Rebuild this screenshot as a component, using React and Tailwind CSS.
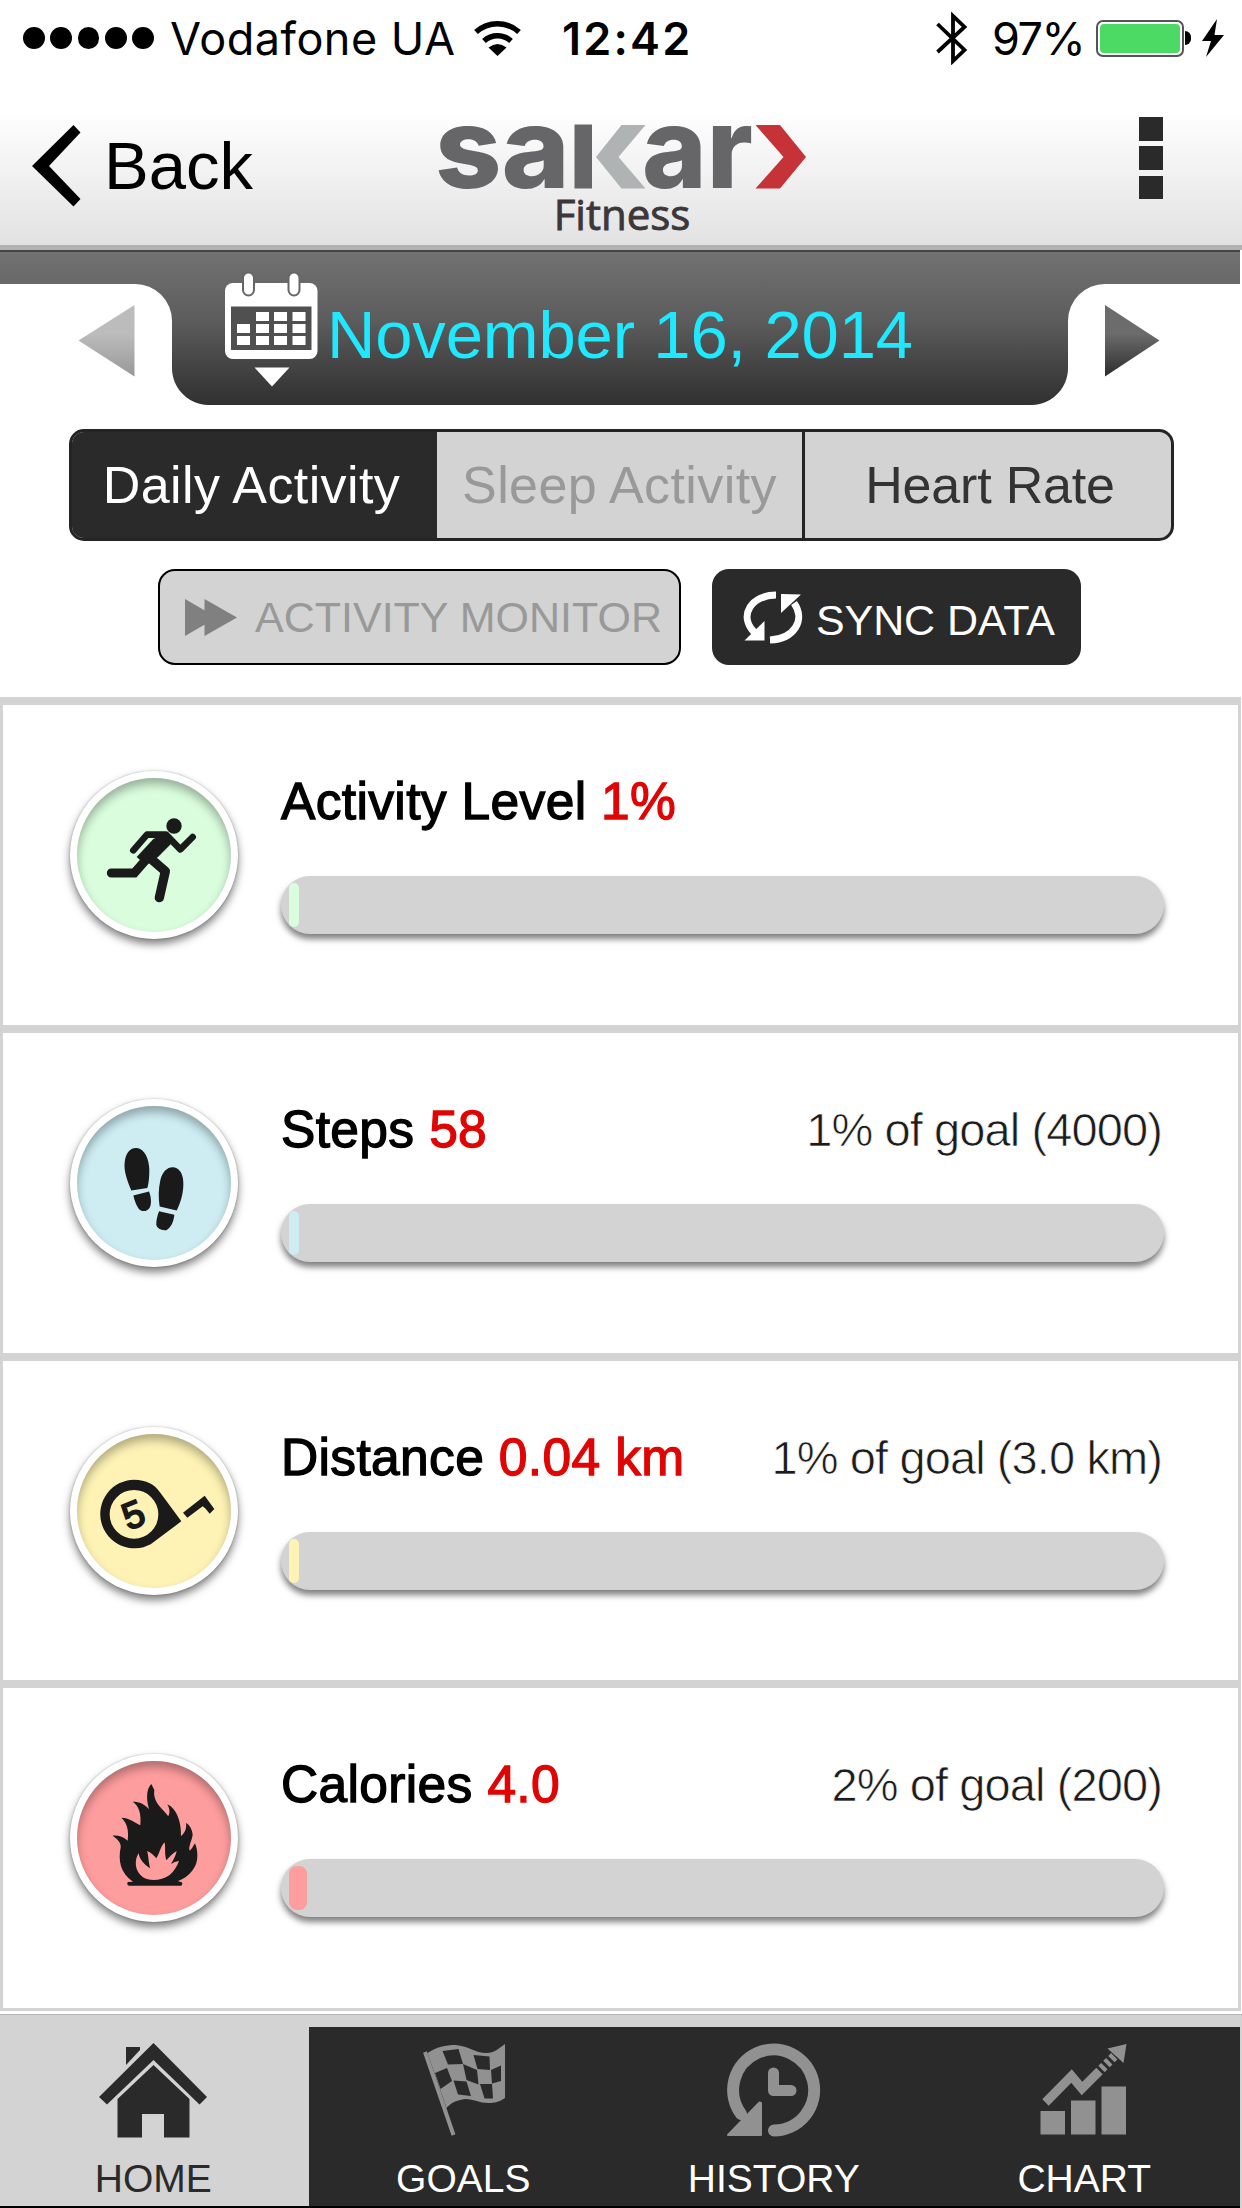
import React from 'react';

const metrics = [
  { id: 'activity', label: 'Activity Level', value: '1%', goal: '', tint: 'bg-[#d9fddd]', fill: 10, Icon: RunnerIcon },
  { id: 'steps', label: 'Steps', value: '58', goal: '1% of goal (4000)', tint: 'bg-[#cdedf3]', fill: 10, Icon: StepsIcon },
  { id: 'distance', label: 'Distance', value: '0.04 km', goal: '1% of goal (3.0 km)', tint: 'bg-[#fef3b5]', fill: 10, Icon: TapeIcon },
  { id: 'calories', label: 'Calories', value: '4.0', goal: '2% of goal (200)', tint: 'bg-[#fe9d9e]', fill: 18, Icon: FireIcon },
];

const tabs = [
  { label: 'HOME', Icon: HomeIcon, active: true },
  { label: 'GOALS', Icon: FlagIcon },
  { label: 'HISTORY', Icon: HistoryIcon },
  { label: 'CHART', Icon: ChartIcon },
];

function RunnerIcon() {
  return (
    <svg viewBox="212 242 504 504" className="w-[168px] h-[168px] shrink-0" fill="none" stroke="#1a1a1a" strokeLinecap="round" strokeLinejoin="round">
      <circle cx="524" cy="407" r="23" fill="#1a1a1a" stroke="none" />
      <path d="M402 480L443 433H500L543 477L580 440" strokeWidth="20" />
      <path d="M462 446L500 428L514 462L476 500L440 525L412 500Z" fill="#1a1a1a" stroke="none" />
      <path d="M336 548H405L440 508L485 450" strokeWidth="27" strokeLinejoin="miter" />
      <path d="M452 503L498 543L480 622" strokeWidth="28" />
    </svg>
  );
}

function StepsIcon() {
  return (
    <svg viewBox="91 115.5 504 504" className="w-[168px] h-[168px] shrink-0" fill="#1a1a1a">
      <g transform="scale(1 1.0714)">
        <path d="M275 364C262 335 252 310 255 285C258 255 275 243 292 245C315 248 328 275 329 305C329 330 327 345 323 357Z" />
        <path d="M281 378L328 367C335 385 336 400 330 412C322 424 305 424 297 415C290 405 285 395 281 378Z" />
        <path d="M360 409C356 385 356 360 362 335C368 310 385 297 402 299C425 303 432 325 431 350C430 375 422 400 411 420Z" />
        <path d="M358 422L404 432C402 450 395 468 380 475C365 477 352 470 350 460C349 448 353 435 358 422Z" />
      </g>
    </svg>
  );
}

function TapeIcon() {
  return (
    <svg viewBox="91 1101 504 504" className="w-[168px] h-[168px] shrink-0" fill="#1a1a1a">
      <path fillRule="evenodd" d="M283 1259C320 1259 346 1274 362 1298L425 1384L333 1453A103 103 0 1 1 283 1259ZM283 1290A73 73 0 1 0 283 1436A73 73 0 1 0 283 1290Z" />
      <path d="M430 1358L495 1307L524 1347L510 1361L498 1346L489 1339L443 1373Z" />
      <text x="281" y="1402" textAnchor="middle" transform="rotate(-22 283 1363)" fontFamily="Liberation Sans, sans-serif" fontSize="112" stroke="#1a1a1a" strokeWidth="6">5</text>
    </svg>
  );
}

function FireIcon() {
  return (
    <svg viewBox="91 162 504 504" className="w-[168px] h-[168px] shrink-0" fill="#1a1a1a">
      <path
        fillRule="evenodd"
        d="M335 252C322 265 318 290 328 328C315 312 300 305 279 305C298 318 305 340 302 376C285 368 268 353 245 353C262 368 268 390 264 422C250 410 238 406 219 407C235 418 245 430 243 442C235 482 242 520 280 545L264 546Q260 557 270 557H425Q431 550 425 546L414 544C450 530 475 500 473 465C473 450 470 440 466 430C460 438 458 446 450 452C445 440 458 420 459 403C456 385 450 375 439 369C442 385 435 400 424 408C425 380 418 330 383 313C392 330 390 340 386 349C375 330 338 310 344 270ZM297 460C283 480 285 515 310 532C330 545 365 543 390 525C405 512 412 498 418 483C408 484 402 488 394 492C402 478 408 468 411 453C398 460 390 470 380 481C374 460 378 445 375 427C362 440 360 460 350 475C345 468 335 458 322 453C328 470 325 485 332 505C315 495 300 480 297 460Z"
      />
    </svg>
  );
}

function HomeIcon() {
  return (
    <svg viewBox="99 2040 110 100" className="w-[110px] h-[100px]" fill="#2a2a2a">
      <path d="M127 2047H141V2050L127 2065Z" />
      <path d="M154.5 2043L208 2097L200.5 2104.5L154.5 2060L108 2104.5L100 2097Z" />
      <path d="M154.5 2065L190.5 2099V2137.500H165V2114H143V2137.500H118.500V2099Z" />
    </svg>
  );
}

function FlagIcon() {
  return (
    <svg viewBox="408.500 2040 110 100" className="w-[110px] h-[100px]">
      <path d="M425.500 2052L454 2135" stroke="#919191" strokeWidth="4" />
      <path d="M428 2053C437 2047 446 2045 456 2045C470 2046 475 2053 487 2053C495 2053 500 2048 505.500 2044V2098C500 2102 495 2103 489 2103C480 2103 474 2099 466 2099C457 2100 451 2103 447 2108Z" fill="#919191" />
      <g fill="#2a2a2a">
        <path d="M443 2051L459 2049L463.500 2064L448.500 2064.500Z" />
        <path d="M474 2055L490 2056.500L490.500 2070L478 2069Z" />
        <path d="M435.500 2073L447.500 2068L452.500 2081L441 2089Z" />
        <path d="M463.500 2064L477.500 2070L479 2084.500L467 2080Z" />
        <path d="M491.500 2070L501.500 2065.500V2081L492.500 2083.500Z" />
        <path d="M454 2080.500L467 2081.500L471.500 2096L458.500 2094.500Z" />
        <path d="M480.500 2084L492.500 2084L493.500 2098.500L485 2098.500Z" />
      </g>
    </svg>
  );
}

function HistoryIcon() {
  return (
    <svg viewBox="718 2040 110 100" className="w-[110px] h-[100px]" fill="none" stroke="#919191" strokeLinecap="round" strokeLinejoin="round">
      <path d="M773 2130.500A40.500 40.500 0 1 0 740 2114" strokeWidth="12" />
      <path d="M772.500 2073V2090.500H790" strokeWidth="11" />
      <path d="M727 2135L758.500 2102.500L760 2103V2135Z" fill="#919191" strokeWidth="2" />
    </svg>
  );
}

function ChartIcon() {
  return (
    <svg viewBox="1028.500 2040 110 100" className="w-[110px] h-[100px]" fill="#919191">
      <path d="M1040 2111H1064.500V2134.500H1040ZM1070.500 2100.500H1095V2134.500H1070.500ZM1101 2086.500H1125.500V2134.500H1101Z" />
      <path d="M1045 2102.500L1071 2076L1081.500 2088.500L1099 2071" fill="none" stroke="#919191" strokeWidth="9" />
      <path d="M1101 2069L1114 2056" fill="none" stroke="#919191" strokeWidth="9" strokeDasharray="4 3" />
      <path d="M1126 2044L1107 2048.500L1123 2063Z" />
    </svg>
  );
}

function CalendarIcon() {
  return (
    <svg viewBox="224 272 95 116" className="w-[95px] h-[116px]">
      <rect x="225" y="283" width="92.500" height="76" rx="8" fill="#fff" />
      <rect x="243" y="272.500" width="11" height="23" rx="5.500" fill="#fff" stroke="#666" strokeWidth="2" />
      <rect x="288.500" y="272.500" width="11" height="23" rx="5.500" fill="#fff" stroke="#666" strokeWidth="2" />
      <rect x="231" y="306.500" width="80.500" height="43.500" fill="#505050" />
      <path fill="#fff" d="M256 312h13v9h-13zM274 312h13v9h-13zM292.500 312h13v9h-13zM237 324h13v9h-13zM256 324h13v9h-13zM274 324h13v9h-13zM292.500 324h13v9h-13zM237 336h13v9h-13zM256 336h13v9h-13zM274 336h13v9h-13zM292.500 336h13v9h-13z" />
      <path d="M254.500 367.500H289.500L272 386.500Z" fill="#fff" />
    </svg>
  );
}

function Logo() {
  return (
    <div className="flex w-[370px] flex-col items-center">
      <svg viewBox="437 120 370 74" className="w-[370px] h-[74px] overflow-visible" fill="#666668" fontFamily="Inter, sans-serif" fontWeight="800" fontSize="113">
        <text x="435" y="188" textLength="135" lengthAdjust="spacingAndGlyphs">sa</text>
        <rect x="574.5" y="124.500" width="17.500" height="64" />
        <path d="M621.500 125H645.500L618.500 157L645.500 188.500H621.500L596 157Z" fill="#b0b3b3" />
        <text x="642" y="188" textLength="111" lengthAdjust="spacingAndGlyphs">ar</text>
        <path d="M755.500 125H780L806 157L780 188.500H755.500L783.500 157Z" fill="#c53238" />
      </svg>
      <div className="font-['Open_Sans',sans-serif] text-[42px] leading-[40px] font-medium text-[#3c3739] [-webkit-text-stroke:0.9px]">Fitness</div>
    </div>
  );
}

function StatusBar() {
  return (
    <div className="flex h-[76px] items-center font-['Inter',sans-serif] text-[45px] leading-none text-black">
      <div className="ml-[23px] flex gap-[5.500px]">
        {[0, 1, 2, 3, 4].map((n) => <span key={n} className="h-[22px] w-[21.800px] rounded-full bg-black" />)}
      </div>
      <div className="ml-[16px] w-[303px] whitespace-nowrap tracking-[0.500px]">Vodafone UA</div>
      <svg viewBox="473 18 49 38" className="h-[38px] w-[49px]" fill="none" stroke="#000" strokeWidth="5.500">
        <path d="M476 31A32 32 0 0 1 519 31" />
        <path d="M484 40A20 20 0 0 1 511 40" />
        <path d="M488.500 46.500Q497.500 39.500 506.500 46.500L497.500 55Z" fill="#000" stroke="none" />
      </svg>
      <div className="ml-[40px] w-[373px] whitespace-nowrap font-semibold tracking-[2.200px]">12:42</div>
      <svg viewBox="935 11 33 54" className="h-[54px] w-[33px]" fill="none" stroke="#000" strokeWidth="3.800">
        <path d="M937.500 24L964.500 50L953 61V16L964.500 27L937.500 52" />
      </svg>
      <div className="ml-[24px] w-[104px] whitespace-nowrap tracking-[-1.500px]">97%</div>
      <div className="h-[37px] w-[88px] rounded-[7px] border-2 border-[#555] p-[2px]">
        <div className="h-full rounded-[4px] bg-[#4cd964]" />
      </div>
      <div className="ml-[1px] h-[14px] w-[6px] rounded-r-full bg-black" />
      <svg viewBox="1202 17 24 40" className="ml-[10px] h-[40px] w-[24px]">
        <path d="M1218 18L1203 40H1212L1207 56L1225 34H1215.500Z" fill="#000" />
      </svg>
    </div>
  );
}

function Header() {
  return (
    <header className="flex h-[174px] items-start border-b-[5px] border-[#b2b2b2] bg-gradient-to-b from-white from-20% to-[#e2e2e2]">
      <button className="ml-[31px] mt-[46px] flex w-[406px] items-center text-[67px] leading-[88px] text-black">
        <svg viewBox="31 122 51 86" className="h-[86px] w-[51px]">
          <path d="M32 165L73.500 124L80.500 131.500L49 165L80.500 198L73.500 205.500Z" fill="#000" />
        </svg>
        <span className="ml-[22px]">Back</span>
      </button>
      <div className="mt-[44px]"><Logo /></div>
      <button className="ml-auto mr-[79px] mt-[41px] flex flex-col gap-[5.500px]">
        <span className="h-[23.800px] w-[24px] bg-[#2a2a2a]" />
        <span className="h-[23.800px] w-[24px] bg-[#2a2a2a]" />
        <span className="h-[23.800px] w-[24px] bg-[#2a2a2a]" />
      </button>
    </header>
  );
}

function DateBar() {
  return (
    <div className="h-[155px] w-[1240px] border-t-2 border-[#444] bg-gradient-to-b from-[#727272] via-[#5c5c5c] via-45% to-[#303030] pt-[32px]">
      <div className="flex h-[121px]">
        <button className="w-[172px] rounded-tr-[37px] bg-white">
          <svg viewBox="0 284 172 121" className="h-[121px] w-[172px]">
            <defs>
              <linearGradient id="prev" x1="0" y1="0" x2="0" y2="1"><stop offset="0.400" stopColor="#bcbcbc" /><stop offset="1" stopColor="#989898" /></linearGradient>
            </defs>
            <path d="M134.500 305V376.500L78.500 340.500Z" fill="url(#prev)" />
          </svg>
        </button>
        <div className="relative flex w-[896px]">
          <span className="absolute bottom-0 left-0 h-[37px] w-[37px] bg-[radial-gradient(circle_at_top_right,transparent_36.500px,white_37.500px)]" />
          <span className="absolute bottom-0 right-0 h-[37px] w-[37px] bg-[radial-gradient(circle_at_top_left,transparent_36.500px,white_37.500px)]" />
          <div className="-mt-[12px] ml-[52px]"><CalendarIcon /></div>
          <div className="ml-[8px] mt-[11px] whitespace-nowrap text-[67px] leading-[80px] tracking-[-0.150px] text-[#20e8fe]">November 16, 2014</div>
        </div>
        <button className="w-[172px] rounded-tl-[37px] bg-white">
          <svg viewBox="1068 284 172 121" className="h-[121px] w-[172px]">
            <defs>
              <linearGradient id="next" x1="0" y1="0" x2="0" y2="1"><stop offset="0.400" stopColor="#6c6c6c" /><stop offset="1" stopColor="#2c2c2c" /></linearGradient>
            </defs>
            <path d="M1105 305V376.500L1159.500 340.500Z" fill="url(#next)" />
          </svg>
        </button>
      </div>
    </div>
  );
}

function Segments() {
  return (
    <div className="ml-[69px] mt-[24px] flex h-[112px] w-[1105px] overflow-hidden rounded-[15px] border-[3px] border-[#242424] bg-[#d3d3d3] text-[52px] leading-[104px]">
      <button className="w-[365px] bg-[#2a2a2a] pr-[6px] tracking-[0.400px] text-white">Daily Activity</button>
      <button className="w-[368px] border-r-[3px] border-[#242424] tracking-[0.400px] text-[#999]">Sleep Activity</button>
      <button className="flex-1 pl-[4px] tracking-[-0.200px] text-[#333]">Heart Rate</button>
    </div>
  );
}

function Actions() {
  return (
    <div className="mt-[28px] flex pl-[158px] text-[43px]">
      <button className="flex h-[96px] w-[523px] items-center rounded-[17px] border-[2.500px] border-black bg-[#d3d3d3] pl-[24px] text-[#999]">
        <svg viewBox="184 599 54 40" className="h-[40px] w-[54px]" fill="#808080">
          <path d="M185 601L217 619.500L185 638Z" />
          <path d="M204.500 601L237 619.500L204.500 638Z" />
        </svg>
        <span className="ml-[17px] whitespace-nowrap">ACTIVITY MONITOR</span>
      </button>
      <button className="ml-[31px] flex h-[96px] w-[369px] items-center rounded-[17px] bg-[#2a2a2a] pl-[31px] text-white">
        <svg viewBox="744 591 60 56" className="h-[56px] w-[60px]" fill="none" stroke="#fff" strokeWidth="7">
          <path d="M777 597C753 597 739 617 755 634" />
          <path d="M771 642C795 641 807 622 795 605" />
          <path d="M745.500 642.500L765.500 642.500V623Z" fill="#fff" stroke="none" />
          <path d="M782 596L802 596.500L782 615Z" fill="#fff" stroke="none" />
        </svg>
        <span className="ml-[13px] mt-[7px] whitespace-nowrap tracking-[-0.100px]">SYNC DATA</span>
      </button>
    </div>
  );
}

function MetricRow({ metric }) {
  const { label, value, goal, tint, fill, Icon } = metric;
  return (
    <div className="flex flex-1 border-t-[8px] border-[#d3d3d3]">
      <div className={`ml-[67px] mt-[66px] flex h-[168px] w-[168px] shrink-0 items-center justify-center rounded-full border-[7.500px] border-white shadow-[0_5px_8px_rgba(0,0,0,0.5),0_0_2px_rgba(0,0,0,0.25)] ${tint}`}>
        <div className="flex h-full w-full items-center justify-center rounded-full shadow-[inset_0_6px_10px_rgba(0,0,0,0.3)]">
          <Icon />
        </div>
      </div>
      <div className="ml-[43px] mt-[66px] w-[883px]">
        <div className="flex h-[60px] items-center justify-between whitespace-nowrap text-[51.5px] leading-[60px]">
          <div className="tracking-[0.350px] text-black [-webkit-text-stroke:1.3px]">
            {label} <span className="text-[#e00505]">{value}</span>
          </div>
          <div className="mr-[2px] mt-[2px] text-[47px] tracking-[-0.900px] text-[#1c1c1c] [-webkit-text-stroke:0.7px_white]">{goal}</div>
        </div>
        <div className="mt-[45px] h-[58px] rounded-full bg-[#d3d3d3] py-[7px] pl-[8px] shadow-[0_5px_6px_rgba(0,0,0,0.5)]">
          <div className={`h-[44px] rounded-[8px] ${tint}`} style={{ width: fill }} />
        </div>
      </div>
    </div>
  );
}

function TabBar() {
  return (
    <nav className="flex h-[194px] border-t border-[#b8b8b8] bg-[#d3d3d3] text-[39px] leading-[40px]">
      {tabs.map(({ label, Icon, active }) => (
        <button
          key={label}
          className={[
            'flex flex-col items-center border-b-2 border-black',
            active ? 'w-[308.5px] text-[#2a2a2a] pt-[25px] pr-[2px]' : 'mt-[12px] w-[310.5px] bg-[#2a2a2a] text-white pt-[13px] pr-[1px]',
          ].join(' ')}
        >
          <Icon />
          <span className="mt-[19px]">{label}</span>
        </button>
      ))}
    </nav>
  );
}

export default function App() {
  return (
    <div className="h-[2208px] w-[1242px] overflow-hidden bg-white font-['Liberation_Sans',Arial,sans-serif]">
      <StatusBar />
      <Header />
      <DateBar />
      <Segments />
      <Actions />
      <main className="mt-[32px] flex h-[1314px] w-[1241px] flex-col border-x-[3px] border-b-[3px] border-[#d3d3d3]">
        {metrics.map((m) => <MetricRow key={m.id} metric={m} />)}
      </main>
      <div className="mt-[3px]"><TabBar /></div>
    </div>
  );
}
